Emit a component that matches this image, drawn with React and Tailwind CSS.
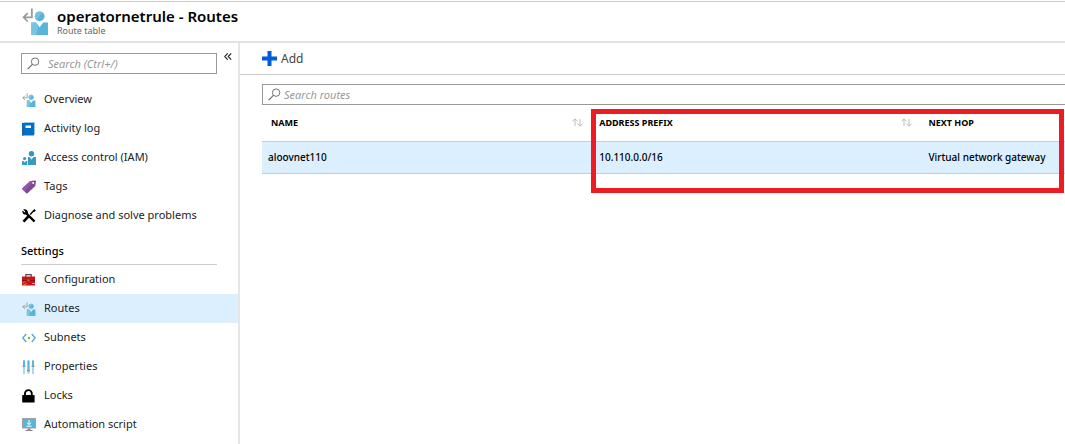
import { useState } from "react";

const RouteTableIcon = ({ className }) => (
  <svg viewBox="0 0 26 26" className={className} aria-hidden="true">
    <path d="M9.500 0.500V9H1.500M5.500 5L1.500 9L5.500 13" fill="none" stroke="#9a9a9a" strokeWidth="1.700" />
    <circle cx="17" cy="8" r="4.700" fill="#59b4d9" />
    <path d="M17 3.300a4.700 4.700 0 0 0-3.200 8.100L19.500 4a4.700 4.700 0 0 0-2.500-.7z" fill="#7ac3e1" />
    <path d="M9 14h4.500l3.500 4.500L20.500 14H25v12H9z" fill="#59b4d9" />
    <path d="M9 14h4.500l2.500 3.200L13.500 26H9z" fill="#7ac3e1" />
  </svg>
);

const ActivityLogIcon = ({ className }) => (
  <svg viewBox="0 0 14 14" className={className} aria-hidden="true">
    <path d="M1.500 0h11.500V12.500H2z" fill="#9cc3e6" />
    <path d="M0 1H12V13.500H0z" fill="#0072c6" />
    <path d="M0 1H1.500V13.500H0z" fill="#1f5fa8" />
    <path d="M3.500 3.500h5.500v2.500H3.500z" fill="#fff" />
  </svg>
);

const AccessControlIcon = ({ className }) => (
  <svg viewBox="0 0 14 14" className={className} aria-hidden="true">
    <circle cx="9.500" cy="2.800" r="2.700" fill="#2f95c8" />
    <path d="M6 6h1.500l2 2.500l2-2.500H14V14H6z" fill="#3999c6" />
    <circle cx="2.600" cy="7.600" r="1.600" fill="#3999c6" />
    <path d="M0 10h1.300l1.300 1.500L4 10h1.300v4H0z" fill="#3999c6" />
  </svg>
);

const TagIcon = ({ className }) => (
  <svg viewBox="0 0 14 14" className={className} aria-hidden="true">
    <path d="M8 1.200L13 0.500Q14 0.500 14 1.500L13.300 6L5.500 13.200Q4.800 13.800 4.200 13.200L0.500 9.300Q0 8.600 0.600 8z" fill="#804998" />
    <path d="M8 1.200L0.600 8Q0 8.600 0.500 9.300L2.500 11.400L12 0.600z" fill="#9158a6" />
    <circle cx="11.200" cy="3" r="1" fill="#fff" />
  </svg>
);

const ToolsIcon = ({ className }) => (
  <svg viewBox="0 0 14 14" className={className} aria-hidden="true">
    <path d="M4.500 4.500L12.500 12.500" stroke="#000" strokeWidth="2.400" />
    <path d="M1.200 0.600L3.400 2.800L2.800 3.500L0.600 1.500C-0.300 3.600 1.500 6 4.200 5.500L6 4.200C6.300 1.600 3.800-0.600 1.200 0.600z" />
    <path d="M12.600 0.800L8.200 5.500" stroke="#000" strokeWidth="1.300" />
    <path d="M12.300 0.200l1.600 1.400l-2 1.600l-0.900-0.900z" />
    <path d="M6.800 7L1.500 12.600" stroke="#000" strokeWidth="2.600" />
  </svg>
);

const ToolboxIcon = ({ className }) => (
  <svg viewBox="0 0 14 14" className={className} aria-hidden="true">
    <path d="M3.800 4V1.600h5.400V4" fill="none" stroke="#555" strokeWidth="1.300" />
    <path d="M0 3.500h13V12.500H0z" fill="#c4161c" />
    <path d="M0 7h13v0.800H0z" fill="#7a1014" />
    <path d="M0.500 10l3-1.500M1 12l4-1.500" stroke="#e8842c" strokeWidth="0.900" />
    <path d="M10 10.500h3" stroke="#d9a0b8" strokeWidth="1" />
    <path d="M5.500 6.600h2v1.600h-2z" fill="#e9672d" />
  </svg>
);

const SubnetIcon = ({ className }) => (
  <svg viewBox="0 0 14 14" className={className} aria-hidden="true">
    <path d="M4.200 3L0.800 7L4.200 11M9.800 3L13.200 7L9.800 11" fill="none" stroke="#49a8d6" strokeWidth="1.300" />
    <circle cx="7" cy="7" r="1.200" fill="#7fba00" />
  </svg>
);

const PropertiesIcon = ({ className }) => (
  <svg viewBox="0 0 14 14" className={className} aria-hidden="true">
    <path d="M1 0.500h2V14H1zM5.500 0.500h2V14h-2zM10 0.500h2V14h-2z" fill="#a9d8ee" />
    <path d="M1 0.500h2V6H1zM5.500 0.500h2V10h-2zM10 0.500h2V6h-2z" fill="#59b4d9" />
    <path d="M0.500 5.500h3V7h-3zM5 10h3v1.500H5zM9.500 5.500h3V7h-3z" fill="#8a9ba5" />
  </svg>
);

const LockIcon = ({ className }) => (
  <svg viewBox="0 0 14 14" className={className} aria-hidden="true">
    <path d="M3 7V4.500a3.400 3.400 0 0 1 6.800 0V7" fill="none" stroke="#000" strokeWidth="1.900" />
    <rect x="0.200" y="6" width="12.400" height="7.500" rx="0.600" />
  </svg>
);

const AutomationIcon = ({ className }) => (
  <svg viewBox="0 0 14 14" className={className} aria-hidden="true">
    <path d="M0 0h14v10.500H0z" fill="#a0a1a2" />
    <path d="M1 1h12v8.500H1z" fill="#59b4d9" />
    <path d="M5.500 10.500h3v1.500h2V13h-7v-1h2z" fill="#8a8b8c" />
    <path d="M7 2v4.500M5 4.700l2 2l2-2M4.500 8.200h5" fill="none" stroke="#fff" strokeWidth="1" />
  </svg>
);

const SearchIcon = ({ className }) => (
  <svg viewBox="0 0 14 14" className={className} aria-hidden="true">
    <circle cx="8.700" cy="5" r="4" fill="none" stroke="#666" strokeWidth="1" />
    <path d="M5.800 8L0.700 13" stroke="#666" strokeWidth="1.200" />
  </svg>
);

const SortIcon = () => (
  <svg viewBox="0 0 11 9" className="h-[9px] w-[11px]" aria-hidden="true">
    <path d="M3 8V1M0.500 3.300L3 0.800L5.500 3.300M8 1v7M5.500 5.700L8 8.200L10.500 5.700" fill="none" stroke="#b4b4b4" strokeWidth="0.900" />
  </svg>
);

const generalItems = [
  { label: "Overview", Icon: RouteTableIcon },
  { label: "Activity log", Icon: ActivityLogIcon },
  { label: "Access control (IAM)", Icon: AccessControlIcon },
  { label: "Tags", Icon: TagIcon },
  { label: "Diagnose and solve problems", Icon: ToolsIcon },
];

const settingsItems = [
  { label: "Configuration", Icon: ToolboxIcon },
  { label: "Routes", Icon: RouteTableIcon },
  { label: "Subnets", Icon: SubnetIcon },
  { label: "Properties", Icon: PropertiesIcon },
  { label: "Locks", Icon: LockIcon },
  { label: "Automation script", Icon: AutomationIcon },
];

const routes = [
  { name: "aloovnet110", prefix: "10.110.0.0/16", nextHop: "Virtual network gateway" },
];

const NavList = ({ items, active, onSelect }) => (
  <ul>
    {items.map(({ label, Icon }) => (
      <li key={label}>
        <a
          href="#"
          onClick={(e) => {
            e.preventDefault();
            onSelect(label);
          }}
          className={`flex h-[29px] items-center gap-2 pl-[22px] text-[11px] ${
            active === label ? "bg-[#dcefff]" : "hover:bg-gray-100"
          }`}
        >
          <Icon className="size-[14px] shrink-0" />
          <span>{label}</span>
        </a>
      </li>
    ))}
  </ul>
);

const SearchBox = ({ id, label, placeholder, value, onChange, className }) => (
  <div className={`flex h-[21px] items-center border-[#999] pl-[5px] ${className}`}>
    <label htmlFor={id} className="shrink-0">
      <span className="sr-only">{label}</span>
      <SearchIcon className="size-[13px]" />
    </label>
    <input
      id={id}
      type="text"
      value={value}
      onChange={(e) => onChange(e.target.value)}
      placeholder={placeholder}
      className="h-full w-full min-w-0 bg-transparent px-[3px] text-[11px] leading-4 outline-none placeholder:text-[#999] placeholder:italic"
    />
  </div>
);

const HeaderCell = ({ children, sortable, className }) => (
  <th scope="col" className={`h-[36px] pr-2 text-left text-[9px] font-bold text-black ${className}`}>
    <div className="flex items-center justify-between">
      <span>{children}</span>
      {sortable && (
        <button type="button" aria-label={`Sort by ${children}`}>
          <SortIcon />
        </button>
      )}
    </div>
  </th>
);

const App = () => {
  const [active, setActive] = useState("Routes");
  const [menuQuery, setMenuQuery] = useState("");
  const [routeQuery, setRouteQuery] = useState("");

  const visibleRoutes = routes.filter((route) => route.name.includes(routeQuery));

  return (
    <div className="flex min-h-screen flex-col bg-white font-['Noto_Sans',sans-serif] text-[12px] text-[#222]">
      <header className="mt-px flex h-[42px] items-center gap-2 border-t border-b-2 border-t-[#ccc] border-b-[#e2e2e2] pl-[22px]">
        <RouteTableIcon className="size-[27px]" />
        <div>
          <h1 className="text-[15px] leading-[18px] font-semibold text-black">operatornetrule - Routes</h1>
          <p className="text-[9px] leading-[12px] text-[#666]">Route table</p>
        </div>
      </header>

      <div className="flex flex-1">
        <nav className="w-[240px] shrink-0 border-r-2 border-[#e6e6e6]">
          <div className="flex items-start pt-[10px] pl-[21px]">
            <SearchBox
              id="menu-search"
              label="Search menu"
              placeholder="Search (Ctrl+/)"
              value={menuQuery}
              onChange={setMenuQuery}
              className="w-[196px] gap-[5px] border"
            />
            <button type="button" aria-label="Collapse menu" className="ml-[7px] flex">
              <svg viewBox="0 0 8 7" className="h-[7px] w-[8px]" aria-hidden="true">
                <path d="M3.700 0.300L0.700 3.500L3.700 6.700M7.200 0.300L4.200 3.500L7.200 6.700" fill="none" stroke="#222" strokeWidth="1.100" />
              </svg>
            </button>
          </div>

          <div className="pt-[11px]">
            <NavList items={generalItems} active={active} onSelect={setActive} />
          </div>
          <h2 className="mx-[21px] mt-3 border-b border-[#ccc] pb-1 text-[11px] leading-[18px] font-medium text-black">
            Settings
          </h2>
          <NavList items={settingsItems} active={active} onSelect={setActive} />
        </nav>

        <main className="min-w-0 flex-1">
          <div className="flex h-[32px] items-center border-b border-[#ccc] pl-[22px]">
            <button type="button" className="flex items-center gap-1 text-[#444]">
              <svg viewBox="0 0 15 15" className="size-[15px]" aria-hidden="true">
                <path d="M5.500 0h4v5.500H15v4H9.500V15h-4V9.500H0v-4h5.500z" fill="#015cda" />
              </svg>
              Add
            </button>
          </div>

          <div className="pt-[9px] pl-[22px]">
            <SearchBox
              id="route-search"
              label="Search routes"
              placeholder="Search routes"
              value={routeQuery}
              onChange={setRouteQuery}
              className="border-y border-l"
            />

            <div className="relative">
              <table className="w-full table-fixed border-collapse">
                <thead>
                  <tr className="border-b border-[#ccc]">
                    <HeaderCell sortable className="w-[41%] pl-[9px]">NAME</HeaderCell>
                    <HeaderCell sortable className="w-[41%] pl-2">ADDRESS PREFIX</HeaderCell>
                    <HeaderCell className="pl-2">NEXT HOP</HeaderCell>
                  </tr>
                </thead>
                <tbody>
                  {visibleRoutes.map((route) => (
                    <tr key={route.name} className="h-[32px] border-b border-[#ccc] bg-[#dcefff] text-[10px] font-medium text-black">
                      <td className="pl-[6px]">{route.name}</td>
                      <td className="pl-2">{route.prefix}</td>
                      <td className="pl-2 whitespace-nowrap">{route.nextHop}</td>
                    </tr>
                  ))}
                </tbody>
              </table>
              <div className="pointer-events-none absolute top-1 right-px left-[41%] h-[84px] border-[5px] border-[#ed1c24]" />
            </div>
          </div>
        </main>
      </div>
    </div>
  );
};

export default App;
